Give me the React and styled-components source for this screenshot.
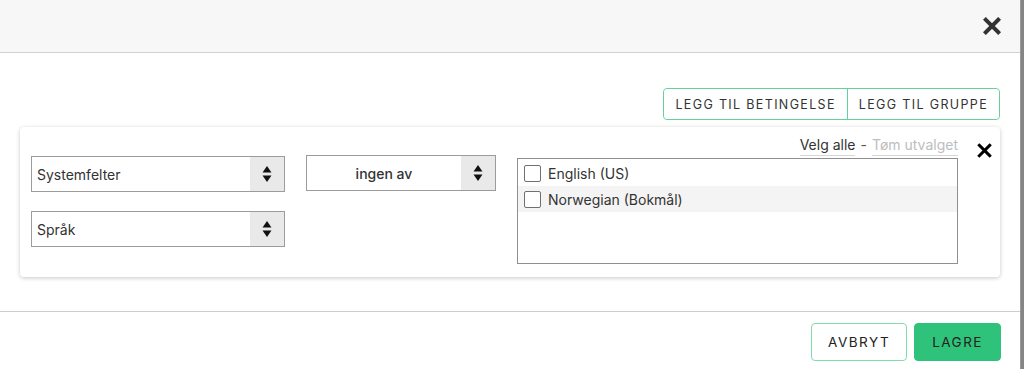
import React from 'react'
import styled, { createGlobalStyle } from 'styled-components'

const GlobalStyle = createGlobalStyle`
  html, body {
    margin: 0;
    padding: 0;
    background: #858585;
    font-family: Inter, "Noto Sans", sans-serif;
    color: #333;
  }
`

const Modal = styled.div`
  width: 1021px;
  height: 369px;
  background: #fff;
  border-right: 1px solid #9a9a9a;
  display: flex;
  flex-direction: column;
  box-sizing: border-box;
`

const Header = styled.div`
  height: 53px;
  flex-shrink: 0;
  box-sizing: border-box;
  background: #f7f7f7;
  border-bottom: 1px solid #d2d2d2;
  display: flex;
  align-items: center;
  justify-content: flex-end;
  padding-right: 19px;
`

const IconButton = styled.button`
  border: 0;
  background: none;
  padding: 0;
  margin: 0;
  display: flex;
  cursor: pointer;
  color: ${p => p.$color || '#333'};
`

const Body = styled.div`
  flex: 1;
  padding: 35px 20px 0 20px;
`

const Toolbar = styled.div`
  display: flex;
  justify-content: flex-end;
  margin-bottom: 7px;
`

const ButtonGroup = styled.div`
  display: flex;
  border: 1px solid #5fd39b;
  border-radius: 4px;
  height: 32px;
  box-sizing: border-box;
`

const GroupButton = styled.button`
  border: 0;
  background: #fff;
  font-family: inherit;
  font-size: 12.5px;
  letter-spacing: 1.35px;
  color: #333;
  padding: 0 11px;
  border-radius: 4px;
  & + & {
    border-left: 1px solid #5fd39b;
    border-radius: 0 4px 4px 0;
  }
`

const Card = styled.div`
  background: #fff;
  border-radius: 4px;
  box-shadow: 0 1px 4px rgba(0, 0, 0, 0.22);
  height: 150px;
  box-sizing: border-box;
  padding: 7px 0 0 11px;
  display: flex;
  gap: 21px;
`

const Column = styled.div`
  display: flex;
  flex-direction: column;
  gap: 19px;
  margin-top: ${p => p.$top || 0}px;
  width: ${p => p.$width}px;
`

const Select = styled.div`
  height: 36px;
  box-sizing: border-box;
  border: 1px solid #9c9c9c;
  display: flex;
  align-items: stretch;
  background: #fff;
`

const SelectValue = styled.div`
  flex: 1;
  display: flex;
  align-items: center;
  justify-content: ${p => (p.$center ? 'center' : 'flex-start')};
  padding-left: ${p => (p.$center ? 0 : 5)}px;
  font-size: 14px;
  font-weight: ${p => (p.$center ? 500 : 400)};
  color: #333;
`

const SelectArrows = styled.div`
  width: 34px;
  background: #e9e9e9;
  display: flex;
  align-items: center;
  justify-content: center;
`

const Values = styled.div`
  width: 441px;
  display: flex;
  flex-direction: column;
`

const Links = styled.div`
  display: flex;
  justify-content: flex-end;
  align-items: center;
  gap: 5px;
  height: 24px;
  font-size: 14px;
`

const LinkText = styled.span`
  color: ${p => (p.$muted ? '#bdbdbd' : '#333')};
  border-bottom: 1px solid #d6d6d6;
  padding-bottom: 2px;
  line-height: 16px;
  cursor: pointer;
`

const Dash = styled.span`
  color: #555;
  line-height: 16px;
  padding-bottom: 3px;
`

const ListBox = styled.div`
  height: 106px;
  box-sizing: border-box;
  border: 1px solid #8f8f8f;
  padding-top: 1px;
`

const Option = styled.label`
  display: flex;
  align-items: center;
  gap: 7px;
  height: 26px;
  padding-left: 6px;
  font-size: 14px;
  color: #333;
  background: ${p => (p.$alt ? '#f4f4f4' : '#fff')};
`

const Check = styled.span`
  width: 15px;
  height: 15px;
  border: 1.5px solid #707070;
  border-radius: 2px;
  background: #fff;
`

const RemoveCell = styled.div`
  margin-left: -2px;
  padding-top: 9px;
`

const Footer = styled.div`
  height: 58px;
  flex-shrink: 0;
  box-sizing: border-box;
  border-top: 1px solid #cdcdcd;
  display: flex;
  justify-content: flex-end;
  align-items: flex-start;
  gap: 7px;
  padding: 11px 19px 0 0;
`

const FooterButton = styled.button`
  height: 38px;
  padding: 0 ${p => p.$pad}px;
  box-sizing: border-box;
  border-radius: 4px;
  font-family: inherit;
  font-size: 13.5px;
  letter-spacing: 1.5px;
  color: #222;
  border: 1px solid ${p => (p.$primary ? '#2fc27b' : '#7fdcab')};
  background: ${p => (p.$primary ? '#2fc27b' : '#fff')};
`

const Arrows = () => (
  <svg width="10" height="18" viewBox="0 0 10 18">
    <path d="M5 1 L9.5 7.5 H0.5 Z" fill="#111" />
    <path d="M5 17 L9.5 10.5 H0.5 Z" fill="#111" />
  </svg>
)

const Cross = ({ size, weight }) => (
  <svg width={size} height={size} viewBox="0 0 16 16">
    <path d="M2.5 2.5 L13.5 13.5 M13.5 2.5 L2.5 13.5" stroke="currentColor" strokeWidth={weight} strokeLinecap="square" />
  </svg>
)

const Dropdown = ({ value, center }) => (
  <Select>
    <SelectValue $center={center}>{value}</SelectValue>
    <SelectArrows>
      <Arrows />
    </SelectArrows>
  </Select>
)

const languages = ['English (US)', 'Norwegian (Bokmål)']

const App = () => {
  return (
    <Modal>
      <GlobalStyle />
      <Header>
        <IconButton $color="#333">
          <Cross size={18} weight={3.6} />
        </IconButton>
      </Header>
      <Body>
        <Toolbar>
          <ButtonGroup>
            <GroupButton>LEGG TIL BETINGELSE</GroupButton>
            <GroupButton>LEGG TIL GRUPPE</GroupButton>
          </ButtonGroup>
        </Toolbar>
        <Card>
          <Column $width={254} $top={22}>
            <Dropdown value="Systemfelter" />
            <Dropdown value="Språk" />
          </Column>
          <Column $width={190} $top={21}>
            <Dropdown value="ingen av" center />
          </Column>
          <Values>
            <Links>
              <LinkText>Velg alle</LinkText>
              <Dash>-</Dash>
              <LinkText $muted>Tøm utvalget</LinkText>
            </Links>
            <ListBox>
              {languages.map((lang, i) => (
                <Option key={lang} $alt={i % 2 === 1}>
                  <Check />
                  {lang}
                </Option>
              ))}
            </ListBox>
          </Values>
          <RemoveCell>
            <IconButton $color="#000">
              <Cross size={15} weight={3.2} />
            </IconButton>
          </RemoveCell>
        </Card>
      </Body>
      <Footer>
        <FooterButton $pad={16}>AVBRYT</FooterButton>
        <FooterButton $primary $pad={17}>LAGRE</FooterButton>
      </Footer>
    </Modal>
  )
}

export default App
